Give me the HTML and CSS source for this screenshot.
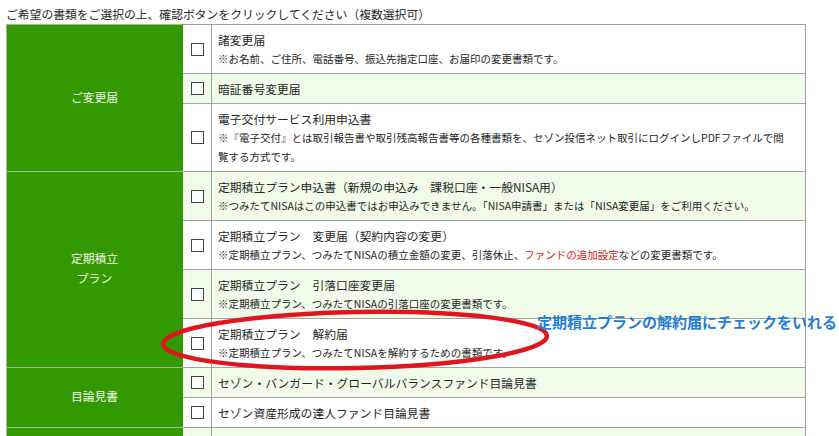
FILE: index.html
```html
<!DOCTYPE html>
<html lang="ja">
<head>
<meta charset="utf-8">
<title>書類請求</title>
<link rel="stylesheet" href="styles.css">
</head>
<body>
<div class="page">
  <p class="lead">ご希望の書類をご選択の上、確認ボタンをクリックしてください（複数選択可）</p>
  <table class="docs">
    <colgroup>
      <col class="c-group">
      <col class="c-chk">
      <col class="c-item">
    </colgroup>
    <tr>
      <th class="group" rowspan="3">ご変更届</th>
      <td class="chk"><span class="box"></span></td>
      <td class="item"><div class="title">諸変更届</div><div class="note">※お名前、ご住所、電話番号、振込先指定口座、お届印の変更書類です。</div></td>
    </tr>
    <tr class="alt">
      <td class="chk"><span class="box"></span></td>
      <td class="item"><div class="title">暗証番号変更届</div></td>
    </tr>
    <tr>
      <td class="chk"><span class="box"></span></td>
      <td class="item"><div class="title">電子交付サービス利用申込書</div><div class="note">※『電子交付』とは取引報告書や取引残高報告書等の各種書類を、セゾン投信ネット取引にログインしPDFファイルで閲<br>覧する方式です。</div></td>
    </tr>
    <tr class="alt">
      <th class="group" rowspan="4">定期積立<br>プラン</th>
      <td class="chk"><span class="box"></span></td>
      <td class="item"><div class="title">定期積立プラン申込書（新規の申込み　課税口座・一般NISA用）</div><div class="note">※つみたてNISAはこの申込書ではお申込みできません。「NISA申請書」または「NISA変更届」をご利用ください。</div></td>
    </tr>
    <tr>
      <td class="chk"><span class="box"></span></td>
      <td class="item"><div class="title">定期積立プラン　変更届（契約内容の変更）</div><div class="note">※定期積立プラン、つみたてNISAの積立金額の変更、引落休止、<span class="red">ファンドの追加設定</span>などの変更書類です。</div></td>
    </tr>
    <tr class="alt">
      <td class="chk"><span class="box"></span></td>
      <td class="item"><div class="title">定期積立プラン　引落口座変更届</div><div class="note">※定期積立プラン、つみたてNISAの引落口座の変更書類です。</div></td>
    </tr>
    <tr>
      <td class="chk"><span class="box"></span></td>
      <td class="item"><div class="title">定期積立プラン　解約届</div><div class="note">※定期積立プラン、つみたてNISAを解約するための書類です。</div></td>
    </tr>
    <tr class="alt">
      <th class="group" rowspan="2">目論見書</th>
      <td class="chk"><span class="box"></span></td>
      <td class="item"><div class="title">セゾン・バンガード・グローバルバランスファンド目論見書</div></td>
    </tr>
    <tr>
      <td class="chk"><span class="box"></span></td>
      <td class="item"><div class="title">セゾン資産形成の達人ファンド目論見書</div></td>
    </tr>
    <tr class="alt">
      <th class="group"></th>
      <td class="chk"><span class="box"></span></td>
      <td class="item"><div class="title">※交付目論見書補完書面</div></td>
    </tr>
  </table>

  <svg class="ring" width="839" height="436" viewBox="0 0 839 436" aria-hidden="true">
    <ellipse cx="355" cy="340" rx="192" ry="28" fill="none" stroke="#e0161e" stroke-width="4.5" transform="rotate(-1.2 355 340)"/>
  </svg>
  <p class="callout">定期積立プランの解約届にチェックをいれる</p>
</div>
</body>
</html>
```

FILE: styles.css
```css
html, body {
  margin: 0;
  padding: 0;
  background: #ffffff;
}

body {
  font-family: "Noto Sans CJK JP", "Noto Sans", sans-serif;
  color: #262626;
}

.page {
  position: relative;
  width: 839px;
  height: 436px;
  overflow: hidden;
  padding-left: 6px;
  box-sizing: border-box;
}

.lead {
  margin: 0;
  padding: 4px 0 1px;
  font-size: 11.8px;
  line-height: 19px;
  color: #262626;
  white-space: nowrap;
}

.docs {
  border-collapse: collapse;
  table-layout: fixed;
  width: 800px;
}

.c-group { width: 176px; }
.c-chk { width: 29px; }

.docs td {
  border: 1px solid #a3a3a3;
  background: #ffffff;
}

.docs tr.alt td {
  background: #f0fbea;
}

.group {
  background: #339900;
  color: #f4fbef;
  font-weight: normal;
  font-size: 11.8px;
  line-height: 20px;
  text-align: center;
  vertical-align: middle;
  border: 1px solid #a9b5a3;
  border-right-color: #339900;
  padding: 0 0 3px;
}

.chk {
  text-align: center;
  vertical-align: middle;
  padding: 0;
  line-height: 0;
}

.box {
  display: inline-block;
  width: 11px;
  height: 11px;
  border: 1px solid #444444;
  background: #ffffff;
}

.item {
  padding: 5px 6px;
  vertical-align: middle;
}

.title {
  font-size: 11.8px;
  line-height: 19px;
  white-space: nowrap;
}

.note {
  font-size: 10.5px;
  line-height: 19px;
  white-space: nowrap;
}

.red {
  color: #e0201c;
}

.ring {
  position: absolute;
  left: 0;
  top: 0;
  pointer-events: none;
}

.callout {
  position: absolute;
  left: 537px;
  top: 313px;
  margin: 0;
  font-size: 15px;
  line-height: 18px;
  font-weight: 700;
  color: #1f7fd6;
  white-space: nowrap;
}
```
